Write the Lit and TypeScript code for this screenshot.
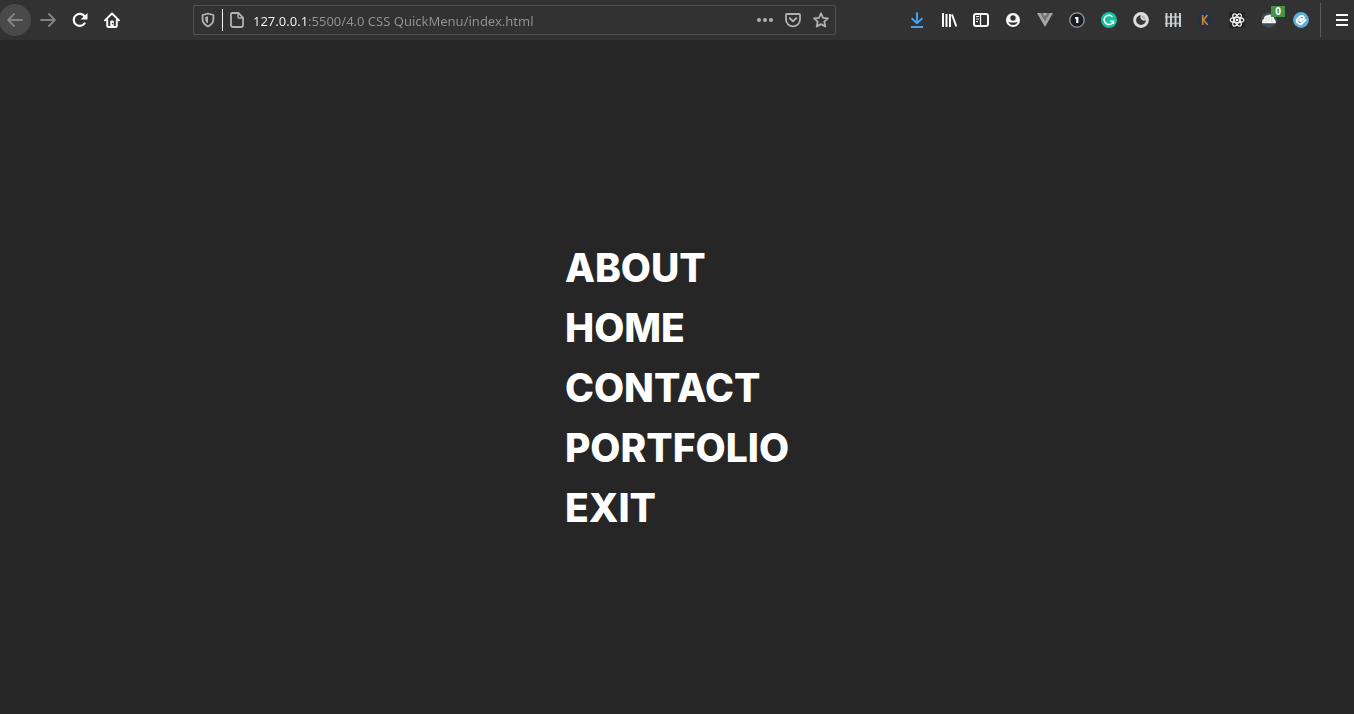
import { LitElement, html, css, svg, nothing, type SVGTemplateResult } from "lit";
import { customElement, property } from "lit/decorators.js";

const icons: Record<string, SVGTemplateResult> = {
  back: svg`<path d="M15 8H1.5M7 2 1.2 8 7 14" fill="none" stroke="currentColor" stroke-width="1.8" stroke-linecap="round" stroke-linejoin="round"/>`,
  forward: svg`<path d="M1 8h13.5M9 2l5.8 6L9 14" fill="none" stroke="currentColor" stroke-width="1.8" stroke-linecap="round" stroke-linejoin="round"/>`,
  reload: svg`<path d="M12.6 11.4A6 6 0 1 1 12.8 4.6" fill="none" stroke="currentColor" stroke-width="2.2" stroke-linecap="round"/><path d="M15.500 1v6a.6.6 0 0 1-.6.6H8.6z" fill="currentColor"/>`,
  home: svg`<path d="M1 8.4 8 1.5l7 6.9M3.2 8v5.8q0 1.2 1.2 1.2h7.2q1.2 0 1.2-1.2V8" fill="none" stroke="currentColor" stroke-width="2" stroke-linecap="round" stroke-linejoin="round"/><path d="M6.2 14V9.6q0-1 1-1h1.6q1 0 1 1V14z" fill="currentColor"/><circle cx="8.6" cy="11.6" r=".8" fill="#323232"/>`,
  shield: svg`<path d="M8 1.6 13.4 3v4.2q0 4.6-5.4 7.2-5.4-2.6-5.4-7.2V3z" fill="none" stroke="currentColor" stroke-width="1.8" stroke-linejoin="round"/><path d="M8 4.2v7.4Q5.200 9.800 5.200 7.200V4.900z" fill="currentColor"/>`,
  page: svg`<path d="M3.200 1H9.400L14 5.600V13q0 2-2 2H4q-2 0-2-2V2.600Q2 1 3.200 1z" fill="none" stroke="currentColor" stroke-width="1.8" stroke-linejoin="round"/><path d="M9 1v4q0 1 1 1h4" fill="none" stroke="currentColor" stroke-width="1.4"/>`,
  dots: svg`<g fill="currentColor"><circle cx="2" cy="8" r="2"/><circle cx="8" cy="8" r="2"/><circle cx="14" cy="8" r="2"/></g>`,
  pocket: svg`<path d="M2 2h12q1 0 1 1v4.500a7 6.800 0 0 1-14 0V3q0-1 1-1z" fill="none" stroke="currentColor" stroke-width="1.8"/><path d="m4.800 6.200 3.200 3 3.200-3" fill="none" stroke="currentColor" stroke-width="1.900" stroke-linecap="round" stroke-linejoin="round"/>`,
  star: svg`<path d="m8 1.300 2 4.500 4.900.5-3.600 3.300 1 4.900L8 12.100l-4.300 2.400 1-4.900L1.100 6.300 6 5.800z" fill="none" stroke="currentColor" stroke-width="1.800" stroke-linejoin="round"/>`,
  download: svg`<path d="M8 1v10M3.200 6.800 8 11.300l4.800-4.500" fill="none" stroke="#45a1e8" stroke-width="2" stroke-linecap="round" stroke-linejoin="round"/><path d="M2 15h12" stroke="#45a1e8" stroke-width="2"/>`,
  library: svg`<path d="M2 1v14M5.500 2v13M9 2v13M11 2.500 15.300 14.500" fill="none" stroke="currentColor" stroke-width="2"/>`,
  sidebar: svg`<rect x="1" y="2" width="14" height="12" rx="2" fill="none" stroke="currentColor" stroke-width="2"/><path d="M7.500 2v12" stroke="currentColor" stroke-width="1.300"/><path d="M3 4.500h3M3 7h3M3 9.500h2" stroke="currentColor" stroke-width="1.200"/>`,
  account: svg`<circle cx="8" cy="8" r="7" fill="currentColor"/><circle cx="8" cy="6" r="2.700" fill="#323232"/><path d="M3.300 9.500q1 .9 2.500.9h4.400q1.500 0 2.500-.9-1 3.500-4.700 3.500T3.300 9.500z" fill="#323232"/>`,
  vue: svg`<path d="M0 1h16L8 15z" fill="#a6a6a8"/><path d="M3.200 1h9.600L8 9.500z" fill="#737375"/><path d="M6 1h4L8 4.500z" fill="#b3b3b5"/>`,
  one: svg`<circle cx="8" cy="8" r="7.200" fill="#191d27" stroke="#97999c" stroke-width="1.300"/><path d="M6 5h3.400v6H7.200V7H6z" fill="#fff"/>`,
  grammar: svg`<circle cx="8" cy="8" r="8" fill="#15bfa0"/><path d="M11.500 4.800A4.700 4.700 0 1 0 12.400 9.200H9.200M12.500 12v-2.800" fill="none" stroke="#fff" stroke-width="1.500"/>`,
  moon: svg`<circle cx="8" cy="8" r="7.900" fill="#dcdcdc"/><path d="M8 3.200A4.900 4.900 0 1 0 12.900 8 3.500 3.500 0 0 1 8 3.200z" fill="#38383a"/><path d="M8.500 3.200A4.900 4.900 0 0 1 12.800 7.400 3.500 3.500 0 0 1 8.500 3.200z" fill="#bcbcbe"/>`,
  fence: svg`<path d="M0 5h16M0 11.500h16" stroke="#a7aeb2" stroke-width="1.500"/><path d="M1.500 1v14M6 1v14M10.500 1v14M15 1v14" stroke="#cfd3d5" stroke-width="1.900"/>`,
  key: svg`<circle cx="8" cy="8" r="7.800" fill="#243249"/><path d="M5.700 3v10M10.500 3 6.500 8l4.300 5" fill="none" stroke="#c98232" stroke-width="1.700"/>`,
  react: svg`<rect width="16" height="16" fill="#242426"/><g fill="none" stroke="#f1f1f1" stroke-width="1.200"><ellipse cx="8" cy="8" rx="6.800" ry="2.700"/><ellipse cx="8" cy="8" rx="6.800" ry="2.700" transform="rotate(60 8 8)"/><ellipse cx="8" cy="8" rx="6.800" ry="2.700" transform="rotate(120 8 8)"/></g><circle cx="8" cy="8" r="1.300" fill="#fff"/>`,
  cloud: svg`<circle cx="8" cy="8" r="7.800" fill="#414a52"/><path d="M1.300 11.200Q.6 7.800 3 6.800 3.300 3 6.600 3.200 9 1.600 10.600 3.800q3 .4 2.700 3.200 2 1.200 1.400 4.200z" fill="#f4f4f4"/><path d="M8 4.500V9M5.300 6v4M10.700 6v4" stroke="#c9ced1" stroke-width=".7"/>`,
  swirl: svg`<circle cx="8" cy="8" r="7.900" fill="#62acd8"/><path d="M7.800 9 11 6.200Q10.500 3 7.500 4.200L3.700 7.700Q3.500 11 6.200 11.800L8 12.200 12.500 8" fill="none" stroke="#fff" stroke-width="1.900" stroke-linecap="round" stroke-linejoin="round"/><path d="M8 6.800 6 8.700" stroke="#fff" stroke-width="1.500" stroke-linecap="round"/>`,
  menu: svg`<path d="M2 3h12M2 8h12M2 13h12" stroke="currentColor" stroke-width="2"/>`,
};

@customElement("tool-button")
class ToolButton extends LitElement {
  @property() icon = "";
  @property() label = "";
  @property() badge = "";

  static styles = css`
    :host { display: block; flex: none; }
    .button {
      position: relative;
      display: grid;
      place-items: center;
      width: var(--tool-size, 32px);
      height: 32px;
      padding: 0;
      border: 0;
      border-radius: 50%;
      background: var(--tool-fill, transparent);
      color: inherit;
      cursor: pointer;
    }
    .glyph { display: block; width: 16px; height: 16px; }
    .badge {
      position: absolute;
      top: 2px;
      right: 0;
      width: 14px;
      height: 11px;
      background: #459445;
      color: #fff;
      font: bold 10px/11px "Open Sans", sans-serif;
      text-align: center;
    }
  `;

  render() {
    return html`<button class="button" type="button" aria-label=${this.label}>
      <svg class="glyph" viewBox="0 0 16 16" aria-hidden="true">${icons[this.icon]}</svg>
      ${this.badge ? html`<span class="badge">${this.badge}</span>` : nothing}
    </button>`;
  }
}

@customElement("browser-toolbar")
class BrowserToolbar extends LitElement {
  static styles = css`
    :host {
      display: flex;
      align-items: center;
      height: 40px;
      background: #323232;
      color: #f9f9fa;
    }
    .group { display: flex; align-items: center; }
    .dim { color: #818486; }
    .back { --tool-fill: #4a4a4a; margin: 0 1px 0 -1px; }
    .address {
      display: flex;
      align-items: center;
      flex: 1;
      min-width: 0;
      box-sizing: border-box;
      height: 30px;
      margin: 0 65px;
      border: 1px solid #515151;
      border-radius: 2px;
      color: #b1b1b3;
    }
    .identity { --tool-size: 28px; }
    .actions { --tool-size: 28px; }
    .rule { width: 1px; height: 22px; background: #f0f0f0; }
    .url {
      flex: 1;
      min-width: 0;
      height: 28px;
      padding: 2px 0 0 2px;
      box-sizing: border-box;
      border: 0;
      outline: 0;
      background: linear-gradient(90deg, #f9f9fa 57px, #929294 57px);
      -webkit-background-clip: text;
      background-clip: text;
      -webkit-text-fill-color: transparent;
      color: #f9f9fa;
      font: 13px/20px "Noto Sans", sans-serif;
    }
    .divider { width: 1px; height: 34px; margin-left: 3px; background: #5c5c5c; }
    .menu { --tool-size: 24px; margin-left: 9px; }
    .end { overflow: hidden; }
  `;

  private extensions = [
    ["download", "Downloads"],
    ["library", "Library"],
    ["sidebar", "Sidebars"],
    ["account", "Account"],
    ["vue", "Vue devtools"],
    ["one", "Passwords"],
    ["grammar", "Grammar"],
    ["moon", "Dark mode"],
    ["fence", "Fence"],
    ["key", "Keys"],
    ["react", "React devtools"],
    ["cloud", "Cloud", "0"],
    ["swirl", "Clips"],
  ];

  render() {
    return html`
      <nav class="group" aria-label="History">
        <tool-button class="back dim" icon="back" label="Back"></tool-button>
        <tool-button class="dim" icon="forward" label="Forward"></tool-button>
        <tool-button icon="reload" label="Reload"></tool-button>
        <tool-button icon="home" label="Home"></tool-button>
      </nav>
      <div class="address">
        <tool-button class="identity" icon="shield" label="Protection"></tool-button>
        <span class="rule"></span>
        <tool-button class="identity" icon="page" label="Site information"></tool-button>
        <input class="url" type="text" aria-label="Address" spellcheck="false"
          value="127.0.0.1:5500/4.0 CSS QuickMenu/index.html" />
        <div class="group actions">
          <tool-button icon="dots" label="Page actions"></tool-button>
          <tool-button icon="pocket" label="Save to Pocket"></tool-button>
          <tool-button icon="star" label="Bookmark"></tool-button>
        </div>
      </div>
      <div class="group end">
        ${this.extensions.map(
          ([icon, label, badge]) =>
            html`<tool-button icon=${icon} label=${label} badge=${badge ?? ""}></tool-button>`
        )}
        <span class="divider"></span>
        <tool-button class="menu" icon="menu" label="Open menu"></tool-button>
      </div>
    `;
  }
}

@customElement("app-root")
class AppRoot extends LitElement {
  static styles = css`
    :host {
      display: flex;
      flex-direction: column;
      min-height: 100vh;
      background: #262626;
      color: #fff;
    }
    .page {
      flex: 1;
      display: grid;
      place-content: center;
      padding-top: 22px;
    }
    .list { margin: 0; padding: 0; list-style: none; }
    .link {
      display: block;
      color: inherit;
      text-decoration: none;
      font: 800 39px/60px Inter, sans-serif;
    }
  `;

  private entries = ["ABOUT", "HOME", "CONTACT", "PORTFOLIO", "EXIT"];

  render() {
    return html`
      <browser-toolbar></browser-toolbar>
      <main class="page">
        <ul class="list">
          ${this.entries.map((name) => html`<li><a class="link" href="#${name.toLowerCase()}">${name}</a></li>`)}
        </ul>
      </main>
    `;
  }
}
